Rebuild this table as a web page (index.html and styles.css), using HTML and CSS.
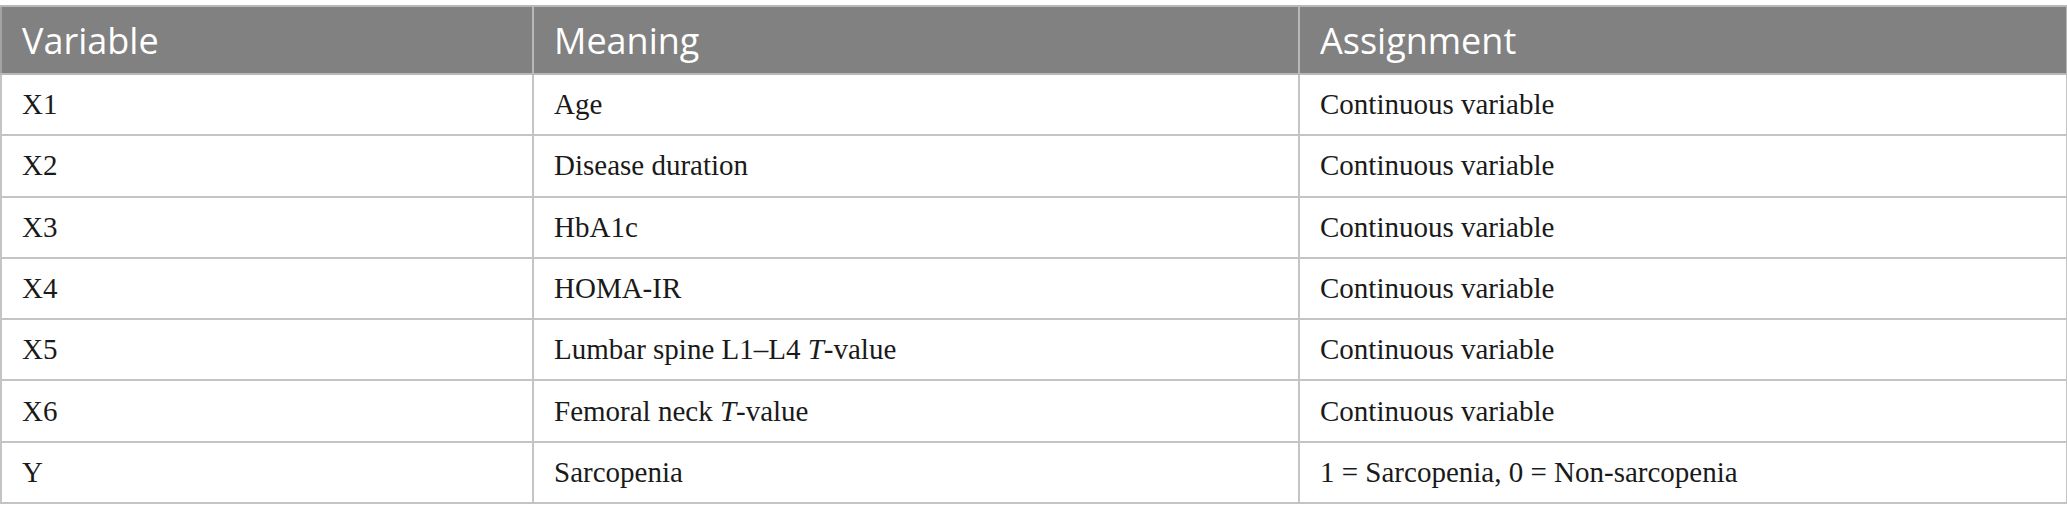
FILE: index.html
```html
<!DOCTYPE html>
<html lang="en">
<head>
<meta charset="utf-8">
<title>Variable assignment</title>
<link rel="stylesheet" href="styles.css">
</head>
<body>
<table class="data-table">
  <colgroup>
    <col class="col-var">
    <col class="col-meaning">
    <col class="col-assign">
  </colgroup>
  <thead>
    <tr class="head-row">
      <th>Variable</th>
      <th>Meaning</th>
      <th>Assignment</th>
    </tr>
  </thead>
  <tbody>
    <tr class="body-row"><td>X1</td><td>Age</td><td>Continuous variable</td></tr>
    <tr class="body-row"><td>X2</td><td>Disease duration</td><td>Continuous variable</td></tr>
    <tr class="body-row"><td>X3</td><td>HbA1c</td><td>Continuous variable</td></tr>
    <tr class="body-row"><td>X4</td><td>HOMA-IR</td><td>Continuous variable</td></tr>
    <tr class="body-row"><td>X5</td><td>Lumbar spine L1–L4 <i>T</i>-value</td><td>Continuous variable</td></tr>
    <tr class="body-row"><td>X6</td><td>Femoral neck <i>T</i>-value</td><td>Continuous variable</td></tr>
    <tr class="body-row"><td>Y</td><td>Sarcopenia</td><td>1 = Sarcopenia, 0 = Non-sarcopenia</td></tr>
  </tbody>
</table>
</body>
</html>
```

FILE: styles.css
```css
html, body {
  margin: 0;
  padding: 0;
  background: #ffffff;
}

body {
  padding-top: 5px;
}

.data-table {
  width: 2066px;
  border-collapse: collapse;
  table-layout: fixed;
}

.col-var { width: 532px; }
.col-meaning { width: 766px; }
.col-assign { width: 768px; }

.data-table th,
.data-table td {
  border: 2px solid #c4c4c4;
  padding: 0 20px;
  text-align: left;
  vertical-align: middle;
}

.head-row {
  height: 68px;
}

.head-row th {
  background: #808180;
  color: #ffffff;
  font-family: "Open Sans", "Noto Sans", sans-serif;
  font-weight: 400;
  font-size: 36px;
  border-color: #b8b8b8;
  border-left-color: #a4a4a4;
}

.body-row {
  height: 61.3px;
}

.body-row td {
  font-family: "Liberation Serif", "Times New Roman", serif;
  font-size: 29px;
  color: #1a1a1a;
}

.body-row td i {
  font-style: italic;
}
```
